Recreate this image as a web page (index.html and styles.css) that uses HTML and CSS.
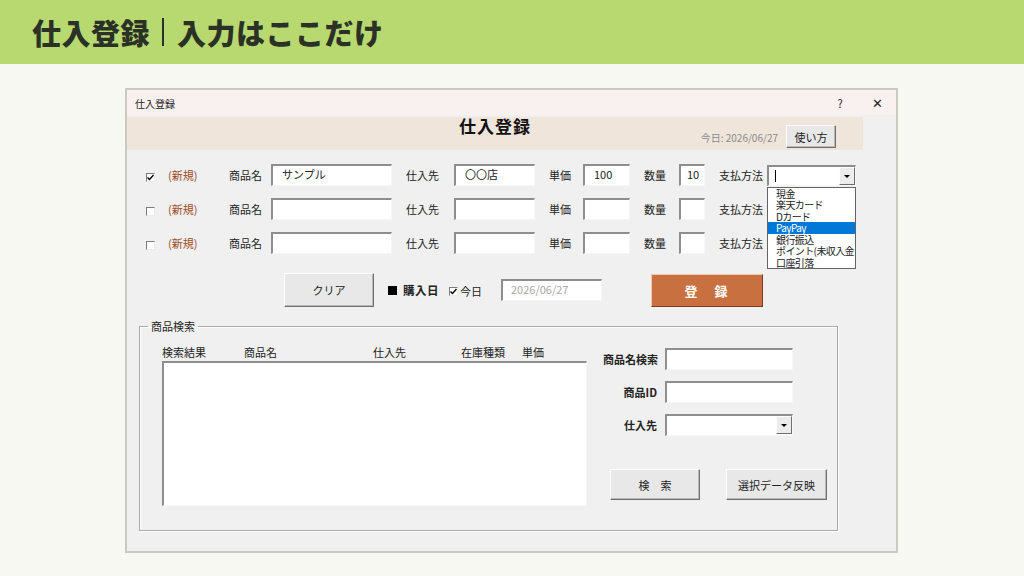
FILE: index.html
```html
<!DOCTYPE html>
<html>
<head>
    <title>仕入登録</title>
    <link rel="stylesheet" href="styles.css">
</head>
<body>
    <header class="topbar">
        <h1>仕入登録<span class="sep"></span>入力はここだけ</h1>
    </header>

    <main class="stage">
        <div class="shot">
            <div class="window">
                <!-- title bar -->
                <div class="titlebar">
                    <span class="caption">仕入登録</span>
                    <span class="help">?</span>
                    <span class="close">✕</span>
                </div>

                <!-- banner -->
                <div class="banner">
                    <div></div>
                    <div class="banner-title">仕入登録</div>
                    <div class="banner-right">
                        <span class="today">今日: 2026/06/27</span>
                        <button class="btn btn-guide">使い方</button>
                    </div>
                </div>

                <!-- entry rows -->
                <div class="entry-grid">
                    <span class="chk checked"><svg width="7" height="7" viewBox="0 0 7 7"><polyline points="0.5,3.5 2.5,5.5 6.5,1" fill="none" stroke="#000" stroke-width="1.4"/></svg></span>
                    <span class="new">(新規)</span>
                    <span>商品名</span>
                    <span class="field w-name">サンプル</span>
                    <span>仕入先</span>
                    <span class="field w-shop">〇〇店</span>
                    <span>単価</span>
                    <span class="field w-price">100</span>
                    <span>数量</span>
                    <span class="field w-qty">10</span>
                    <span>支払方法</span>
                    <div class="combo pay-combo">
                        <span class="caret"></span>
                        <span class="combo-btn"><i class="tri"></i></span>
                        <ul class="droplist">
                            <li>現金</li>
                            <li>楽天カード</li>
                            <li>Dカード</li>
                            <li class="sel">PayPay</li>
                            <li>銀行振込</li>
                            <li>ポイント(未収入金</li>
                            <li>口座引落</li>
                        </ul>
                    </div>

                    <span class="chk"></span>
                    <span class="new">(新規)</span>
                    <span>商品名</span>
                    <span class="field w-name"></span>
                    <span>仕入先</span>
                    <span class="field w-shop"></span>
                    <span>単価</span>
                    <span class="field w-price"></span>
                    <span>数量</span>
                    <span class="field w-qty"></span>
                    <span>支払方法</span>
                    <div class="combo pay-combo"></div>

                    <span class="chk"></span>
                    <span class="new">(新規)</span>
                    <span>商品名</span>
                    <span class="field w-name"></span>
                    <span>仕入先</span>
                    <span class="field w-shop"></span>
                    <span>単価</span>
                    <span class="field w-price"></span>
                    <span>数量</span>
                    <span class="field w-qty"></span>
                    <span>支払方法</span>
                    <div class="combo pay-combo"></div>
                </div>

                <!-- actions -->
                <div class="actions">
                    <button class="btn btn-clear">クリア</button>
                    <span class="square"></span>
                    <span class="purchase">購入日</span>
                    <span class="chk checked small-gap"><svg width="7" height="7" viewBox="0 0 7 7"><polyline points="0.5,3.5 2.5,5.5 6.5,1" fill="none" stroke="#000" stroke-width="1.4"/></svg></span>
                    <span class="today-label">今日</span>
                    <span class="field date-field">2026/06/27</span>
                    <button class="btn-register">登　録</button>
                </div>

                <!-- search group -->
                <fieldset class="search">
                    <legend>商品検索</legend>
                    <div class="search-left">
                        <div class="list-head">
                            <span>検索結果</span>
                            <span>商品名</span>
                            <span>仕入先</span>
                            <span>在庫種類</span>
                            <span>単価</span>
                        </div>
                        <div class="listbox"></div>
                    </div>
                    <div class="search-right">
                        <div class="search-form">
                            <label>商品名検索</label>
                            <span class="field"></span>
                            <label>商品ID</label>
                            <span class="field"></span>
                            <label>仕入先</label>
                            <div class="combo"><span class="combo-btn"><i class="tri"></i></span></div>
                        </div>
                        <div class="search-buttons">
                            <button class="btn btn-search">検　索</button>
                            <button class="btn btn-apply">選択データ反映</button>
                        </div>
                    </div>
                </fieldset>
            </div>
        </div>
    </main>
</body>
</html>
```

FILE: styles.css
```css
body {
    margin: 0;
    background: #f8f8f2;
    font-family: "Noto Sans CJK JP", "Noto Sans", sans-serif;
    color: #1a1a1a;
}

/* top heading bar */
.topbar {
    height: 64px;
    background: #b8d96f;
    display: flex;
    align-items: center;
    padding-left: 32px;
}
.topbar h1 {
    margin: 0;
    font-size: 29px;
    font-weight: 900;
    color: #2b3126;
    display: flex;
    align-items: center;
    letter-spacing: 0.5px;
}
.sep {
    display: inline-block;
    width: 2px;
    height: 28px;
    background: #2b3126;
    margin: 0 13px 0 12px;
}

/* screenshot frame */
.stage {
    padding: 24px 0 0 125px;
}
.shot {
    width: 773px;
    height: 465px;
    box-sizing: border-box;
    border: 2px solid #c9cbc0;
    background: #f0f0f0;
}
.window {
    font-size: 11px;
    color: #222;
    height: 100%;
}

.titlebar {
    height: 25px;
    background: #f8f1ef;
    display: flex;
    align-items: center;
    padding-left: 8px;
    font-size: 10px;
}
.titlebar .caption {
    flex: 1;
    padding-top: 2px;
}
.titlebar .help {
    width: 20px;
    text-align: center;
    font-size: 11px;
    margin-right: 15px;
}
.titlebar .close {
    width: 24px;
    text-align: center;
    font-size: 13px;
    margin-right: 7px;
}

.banner {
    margin-top: 2px;
    width: 736px;
    height: 33px;
    background: #efe5da;
    display: grid;
    grid-template-columns: 1fr auto 1fr;
}
.banner-title {
    font-size: 17px;
    font-weight: bold;
    line-height: 18px;
    letter-spacing: 1px;
    color: #111;
}
.banner-right {
    display: flex;
    align-items: center;
    justify-content: flex-end;
    padding: 6px 27px 0 0;
}
.today {
    font-size: 10px;
    color: #8a8a8a;
    margin-right: 8px;
    padding-top: 2px;
}

/* classic buttons */
.btn {
    font-family: inherit;
    font-size: 11px;
    color: #222;
    background: #e8e8e8;
    border: 1px solid;
    border-color: #fdfdfd #6e6e6e #6e6e6e #fdfdfd;
    box-shadow: inset -1px -1px 0 #b9b9b9;
    padding: 0;
}
.btn-guide {
    width: 50px;
    height: 23px;
}

/* entry rows */
.entry-grid {
    margin-top: 14px;
    padding-left: 19px;
    display: grid;
    grid-template-columns: 22px 61px 42px 135px 48px 95px 34px 61px 35px 40px 48px 88px;
    grid-auto-rows: 22px;
    row-gap: 12px;
    align-items: center;
}
.chk {
    width: 9px;
    height: 9px;
    box-sizing: border-box;
    background: #fff;
    border: 1px solid;
    border-color: #7c7c7c #ececec #ececec #7c7c7c;
    display: flex;
    align-items: center;
    justify-content: center;
    margin-top: 4px;
}
.new {
    color: #9c4a1e;
}
.field {
    display: block;
    height: 22px;
    box-sizing: border-box;
    background: #fff;
    border-style: solid;
    border-width: 2px 1px 1px 2px;
    border-color: #8e8e8e #f6f6f6 #f6f6f6 #8e8e8e;
    padding: 1px 0 0 9px;
    line-height: 15px;
    font-size: 11px;
    white-space: nowrap;
    overflow: hidden;
}
.w-name { width: 121px; }
.w-shop { width: 81px; }
.w-price { width: 47px; }
.w-qty { width: 26px; padding-left: 6px; }

.combo {
    position: relative;
    height: 21px;
    box-sizing: border-box;
    background: #fff;
    border-style: solid;
    border-width: 2px 1px 1px 2px;
    border-color: #8e8e8e #f6f6f6 #f6f6f6 #8e8e8e;
}
.pay-combo {
    width: 89px;
}
.caret {
    position: absolute;
    left: 6px;
    top: 3px;
    width: 1px;
    height: 12px;
    background: #000;
}
.combo-btn {
    position: absolute;
    right: 0;
    top: 0;
    width: 16px;
    height: 18px;
    box-sizing: border-box;
    background: #ececec;
    border: 1px solid;
    border-color: #fdfdfd #6e6e6e #6e6e6e #fdfdfd;
    display: flex;
    align-items: center;
    justify-content: center;
}
.tri {
    width: 0;
    height: 0;
    border-left: 3px solid transparent;
    border-right: 3px solid transparent;
    border-top: 3px solid #000;
    margin-top: 1px;
}

/* open dropdown list */
.droplist {
    position: absolute;
    left: -2px;
    top: 20px;
    width: 89px;
    box-sizing: border-box;
    margin: 0;
    padding: 0;
    list-style: none;
    background: #fff;
    border: 1px solid #646464;
    z-index: 2;
    overflow: hidden;
}
.droplist li {
    height: 11.5px;
    line-height: 11.5px;
    padding-left: 8px;
    font-size: 10px;
    letter-spacing: -0.6px;
    white-space: nowrap;
}
.droplist li.sel {
    background: #0078d7;
    color: #fff;
}

/* action row */
.actions {
    margin-top: 19px;
    padding-left: 157px;
    display: flex;
    align-items: center;
}
.btn-clear {
    width: 90px;
    height: 34px;
}
.square {
    width: 9px;
    height: 9px;
    background: #000;
    margin-left: 14px;
}
.purchase {
    font-weight: bold;
    font-size: 11.5px;
    margin-left: 6px;
    letter-spacing: 0.5px;
}
.small-gap {
    margin: 2px 0 0 10px;
}
.today-label {
    margin-left: 2px;
    padding-top: 2px;
}
.date-field {
    width: 101px;
    color: #a8a8a8;
    margin-left: 19px;
    padding-left: 8px;
}
.btn-register {
    width: 112px;
    height: 33px;
    margin-left: 49px;
    background: #c8703f;
    color: #fff;
    font-family: inherit;
    font-size: 13px;
    font-weight: bold;
    border: 1px solid;
    border-color: #f0c9b2 #7a3e1e #7a3e1e #f0c9b2;
    padding: 0;
    letter-spacing: 2px;
}

/* product search group */
.search {
    margin: 12px 0 0 12px;
    width: 699px;
    height: 212px;
    box-sizing: border-box;
    border: 1px solid #a9a9a9;
    box-shadow: inset 1px 1px 0 #fff, 1px 1px 0 #fff;
    padding: 12px 0 0 22px;
    display: flex;
}
.search legend {
    font-size: 11px;
    line-height: 14px;
    padding: 0 3px;
    margin-left: -14px;
}
.search-left {
    width: 425px;
}
.list-head {
    display: grid;
    grid-template-columns: 82px 129px 88px 61px auto;
    height: 14px;
    line-height: 14px;
    margin-bottom: 2px;
}
.listbox {
    height: 145px;
    box-sizing: border-box;
    background: #fff;
    border-style: solid;
    border-width: 2px 1px 1px 2px;
    border-color: #8e8e8e #f6f6f6 #f6f6f6 #8e8e8e;
}

.search-right {
    margin-left: 16px;
}
.search-form {
    margin-top: 3px;
    display: grid;
    grid-template-columns: 54px 128px;
    column-gap: 8px;
    row-gap: 11px;
    grid-auto-rows: 22px;
    align-items: center;
}
.search-form label {
    text-align: right;
    font-weight: bold;
    white-space: nowrap;
}
.search-form .combo {
    height: 22px;
}
.search-buttons {
    margin: 33px 0 0 7px;
    display: flex;
    gap: 26px;
}
.btn-search {
    width: 90px;
    height: 31px;
}
.btn-apply {
    width: 101px;
    height: 31px;
}
```
